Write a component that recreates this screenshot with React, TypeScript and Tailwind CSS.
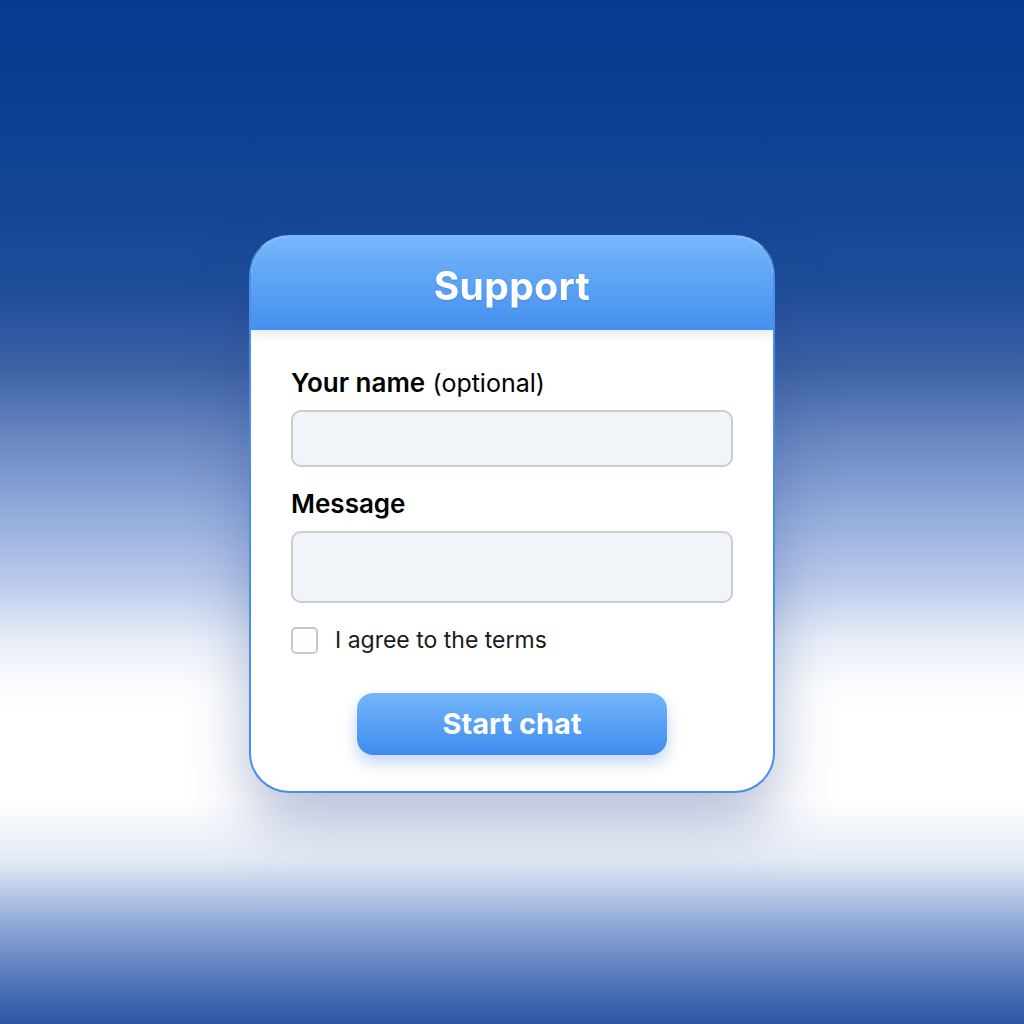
export default function App() {
  return (
    <div
      className="w-full h-[1024px] flex justify-center pt-[235px] bg-[linear-gradient(to_bottom,#073a8f_0%,#0f4292_15%,#1d4c99_28%,#3d62a6_36%,#6a88c2_43%,#98b0de_51%,#bccbec_57%,#e8eef8_62.5%,#fbfcfe_67%,#ffffff_70%,#ffffff_78%,#e4ebf6_84%,#93acd9_90%,#5b7cc0_95%,#2a56a2_100%)]"
      style={{ fontFamily: "Inter, 'Noto Sans', 'Liberation Sans', sans-serif" }}
    >
      <div className="w-[526px] h-[558px] flex flex-col rounded-[40px] overflow-hidden border-2 border-[#4a8fe6] border-t-[#7ab6f8] bg-white shadow-[0_30px_60px_rgba(40,70,140,0.35)]">
        {/* Header */}
        <div className="relative z-10 h-[93px] shrink-0 flex items-center justify-center pt-[5px] bg-[linear-gradient(to_bottom,#74b6fa,#4590f0)] shadow-[0_4px_10px_rgba(20,50,100,0.12)]">
          <h1 className="text-[39px] font-bold text-white tracking-[0.4px] drop-shadow-[0_1px_1px_rgba(0,0,0,0.12)]">
            Support
          </h1>
        </div>

        {/* Form */}
        <div className="flex flex-col px-[40px] pt-[37px]">
          <label className="text-[26px] leading-[32px] text-black">
            <span className="font-semibold">Your name</span>{" "}
            <span className="font-normal text-[25px]">(optional)</span>
          </label>
          <div className="mt-[11px] h-[57px] rounded-[10px] border-2 border-[#c9cdd3] bg-[#f1f4f8]" />

          <label className="mt-[21px] text-[26px] leading-[32px] font-semibold text-black">
            Message
          </label>
          <div className="mt-[11px] h-[72px] rounded-[10px] border-2 border-[#c9cdd3] bg-[#f1f4f8]" />

          <div className="mt-[23px] flex items-center gap-[17px]">
            <div className="w-[27px] h-[27px] rounded-[5px] border-2 border-[#c3c9d2] bg-white" />
            <span className="text-[23px] leading-[28px] text-[#1a1a1a]">I agree to the terms</span>
          </div>

          <div className="mt-[39px] flex justify-center">
            <button className="w-[310px] h-[62px] rounded-[16px] bg-[linear-gradient(to_bottom,#74b6fa,#3f8cf0)] text-white text-[29px] font-bold shadow-[0_8px_16px_rgba(60,120,220,0.3)]">
              Start chat
            </button>
          </div>
        </div>
      </div>
    </div>
  );
}
